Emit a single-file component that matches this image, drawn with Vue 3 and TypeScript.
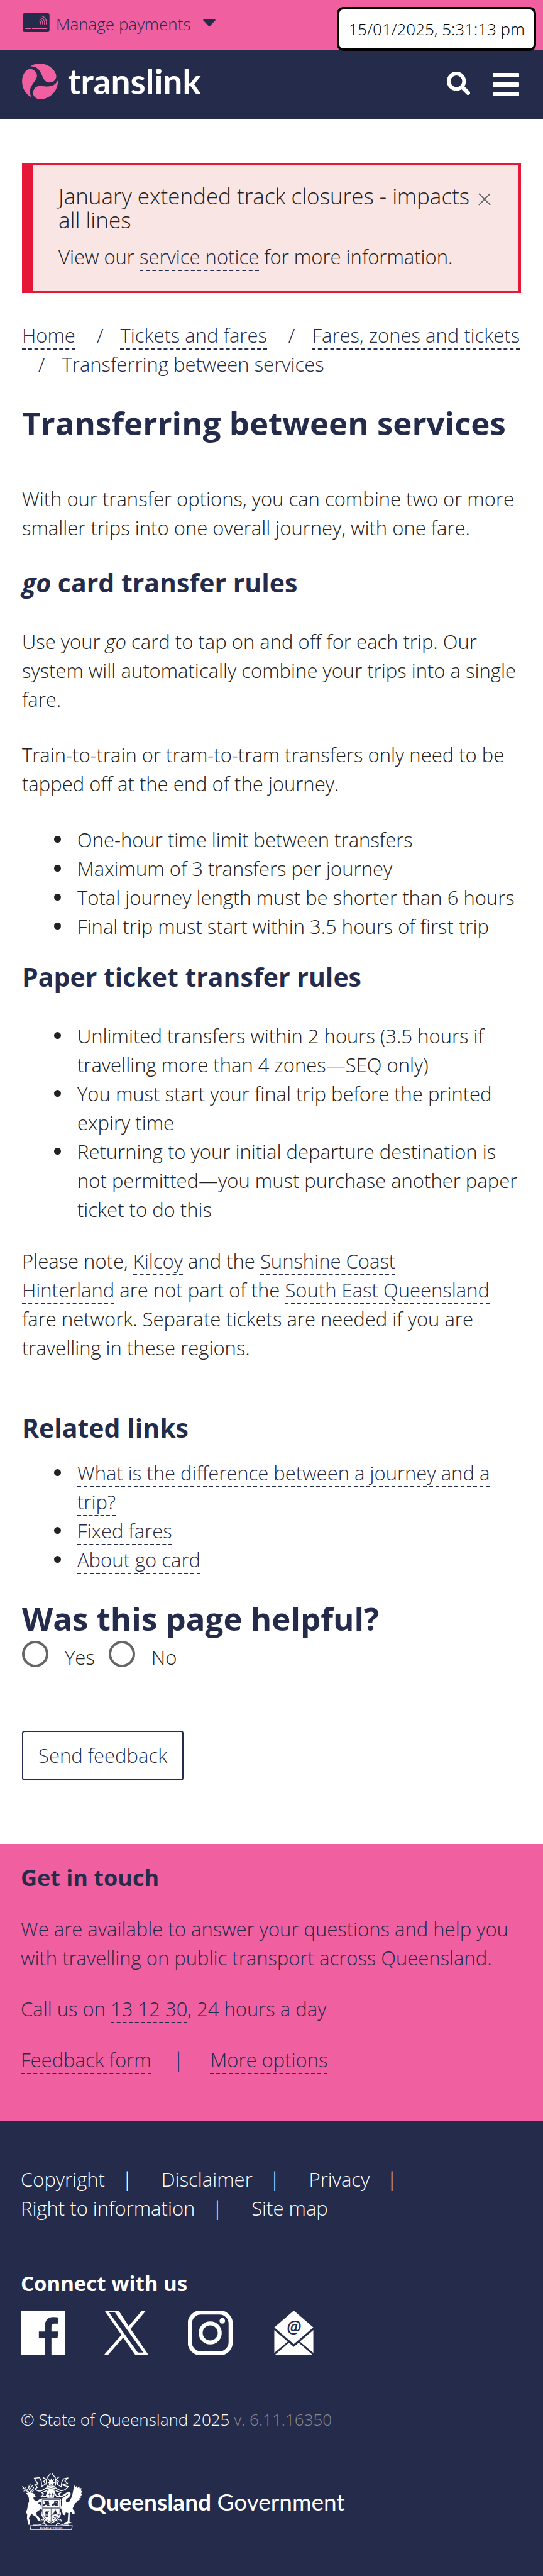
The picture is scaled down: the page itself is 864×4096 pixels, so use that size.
<script setup lang="ts">
import { ref } from 'vue'

interface Crumb {
  label: string
  current?: boolean
}

const alertOpen = ref(true)
const helpful = ref<string | null>(null)

const crumbs: Crumb[] = [
  { label: 'Home' },
  { label: 'Tickets and fares' },
  { label: 'Fares, zones and tickets' },
  { label: 'Transferring between services', current: true },
]

const goCardRules: string[] = [
  'One-hour time limit between transfers',
  'Maximum of 3 transfers per journey',
  'Total journey length must be shorter than 6 hours',
  'Final trip must start within 3.5 hours of first trip',
]

const paperRules: string[] = [
  'Unlimited transfers within 2 hours (3.5 hours if travelling more than 4 zones—SEQ only)',
  'You must start your final trip before the printed expiry time',
  'Returning to your initial departure destination is not permitted—you must purchase another paper ticket to do this',
]

const relatedLinks: string[] = [
  'What is the difference between a journey and a trip?',
  'Fixed fares',
  'About go card',
]

const answers: string[] = ['Yes', 'No']

const footerLinks: string[] = ['Copyright', 'Disclaimer', 'Privacy', 'Right to information', 'Site map']
</script>

<template>
  <div class="page">
    <div class="topbar">
      <button class="payments" type="button">
        <svg class="card-icon" viewBox="41 27 174 123" aria-hidden="true">
          <rect x="41" y="27" width="174" height="123" rx="12" fill="#252b4b" />
          <g fill="none" stroke="#f060a1" stroke-width="5" stroke-linecap="round">
            <path d="M164 45C184 50 200 70 194 97" />
            <path d="M158 56C174 60 186 76 182 97" />
            <path d="M152 67C164 70 172 82 170 97" />
            <path d="M147 78C154 80 159 87 158 97" />
          </g>
          <path d="M60 126H95M104 126H198" fill="none" stroke="#f060a1" stroke-width="6" stroke-linecap="round" />
        </svg>
        <span>Manage payments</span>
        <svg class="caret" viewBox="0 0 20 11" aria-hidden="true">
          <path d="M1 0H19Q21 1 19 2L11 10.500Q10 11.500 9 10.500L1 2Q-1 1 1 0Z" fill="#252b4b" />
        </svg>
      </button>
      <time class="stamp">15/01/2025, 5:31:13 pm</time>
    </div>

    <header class="masthead">
      <a class="brand" href="#">
        <svg class="brand-mark" viewBox="36 350 231 233" aria-hidden="true">
          <g fill="#f060a1">
            <path d="M91 367C113 352 138 350 155 350C215 353 258 400 258 432C258 460 236 474 214 474C184 474 174 448 164 425C149 391 130 367 91 369Z" />
            <path transform="rotate(120 151.500 466.500)" d="M91 367C113 352 138 350 155 350C215 353 258 400 258 432C258 460 236 474 214 474C184 474 174 448 164 425C149 391 130 367 91 369Z" />
            <path transform="rotate(240 151.500 466.500)" d="M91 367C113 352 138 350 155 350C215 353 258 400 258 432C258 460 236 474 214 474C184 474 174 448 164 425C149 391 130 367 91 369Z" />
          </g>
        </svg>
        <span class="brand-name">translink</span>
      </a>
      <div class="tools">
        <button type="button" class="tool" aria-label="Search">
          <svg class="search-icon" viewBox="0 0 50 50" aria-hidden="true">
            <circle cx="20.500" cy="20.500" r="16.500" fill="none" stroke="#fff" stroke-width="8" />
            <path d="M34 34L45.500 45.500" stroke="#fff" stroke-width="9" stroke-linecap="round" />
          </svg>
        </button>
        <button type="button" class="tool" aria-label="Menu">
          <svg class="menu-icon" viewBox="0 0 42 37" aria-hidden="true">
            <rect width="42" height="7" rx="1" fill="#fff" />
            <rect y="15" width="42" height="7" rx="1" fill="#fff" />
            <rect y="30" width="42" height="7" rx="1" fill="#fff" />
          </svg>
        </button>
      </div>
    </header>

    <main>
      <section v-if="alertOpen" class="alert" role="alert">
        <div class="alert-head">
          <p class="alert-title">January extended track closures - impacts all lines</p>
          <button type="button" class="close" aria-label="Close" @click="alertOpen = false">
            <svg viewBox="0 0 20 22" aria-hidden="true">
              <path d="M1 3L19 21M19 3L1 21" stroke="#fff" stroke-width="2" />
              <path d="M1 1L19 19M19 1L1 19" stroke="#6d6465" stroke-width="2" />
            </svg>
          </button>
        </div>
        <p>View our <a href="#">service notice</a> for more information.</p>
      </section>

      <nav aria-label="Breadcrumb">
        <ol class="crumbs">
          <li v-for="crumb in crumbs" :key="crumb.label">
            <span v-if="crumb.current">{{ crumb.label }}</span>
            <a v-else href="#">{{ crumb.label }}</a>
          </li>
        </ol>
      </nav>

      <h1>Transferring between services</h1>
      <p>With our transfer options, you can combine two or more smaller trips into one overall journey, with one fare.</p>

      <h2 class="after-text"><em>go</em> card transfer rules</h2>
      <p>Use your <em>go</em> card to tap on and off for each trip. Our system will automatically combine your trips into a single fare.</p>
      <p class="next">Train-to-train or tram-to-tram transfers only need to be tapped off at the end of the journey.</p>
      <ul class="rules first">
        <li v-for="rule in goCardRules" :key="rule">{{ rule }}</li>
      </ul>

      <h2 class="after-list">Paper ticket transfer rules</h2>
      <ul class="rules">
        <li v-for="rule in paperRules" :key="rule">{{ rule }}</li>
      </ul>
      <p class="note">
        Please note, <a href="#">Kilcoy</a> and the <a href="#">Sunshine Coast Hinterland</a>&nbsp;are not part of the
        <a href="#">South East Queensland</a> fare network. Separate tickets are needed if you are travelling in these regions.
      </p>

      <h2 class="related">Related links</h2>
      <ul class="rules">
        <li v-for="link in relatedLinks" :key="link"><a href="#">{{ link }}</a></li>
      </ul>

      <form @submit.prevent>
        <fieldset>
          <legend>Was this page helpful?</legend>
          <div class="answers">
            <div v-for="answer in answers" :key="answer" class="answer">
              <input :id="'helpful-' + answer" v-model="helpful" type="radio" name="helpful" :value="answer" />
              <label :for="'helpful-' + answer">{{ answer }}</label>
            </div>
          </div>
        </fieldset>
        <button type="submit" class="send">Send feedback</button>
      </form>
    </main>

    <section class="touch">
      <h3>Get in touch</h3>
      <p>We are available to answer your questions and help you with travelling on public transport across Queensland.</p>
      <p>Call us on <a href="#">13 12 30</a>, 24 hours a day</p>
      <div class="touch-links">
        <span><a href="#">Feedback form</a></span>
        <span class="bar">|</span>
        <span><a href="#">More options</a></span>
      </div>
    </section>

    <footer>
      <ul class="legal">
        <li v-for="link in footerLinks" :key="link"><a href="#">{{ link }}</a></li>
      </ul>
      <h3>Connect with us</h3>
      <div class="social">
        <a href="#" aria-label="Facebook">
          <svg viewBox="0 0 96 96" aria-hidden="true">
            <path fill="#fff" d="M4 0H92A4 4 0 0 1 96 4V92A4 4 0 0 1 92 96H66V59H79L81 45H66V35Q66 28 73 28H81V15Q76 14 70 14C58 14 52 22 52 33V45H39V59H52V96H4A4 4 0 0 1 0 92V4A4 4 0 0 1 4 0Z" />
          </svg>
        </a>
        <a href="#" aria-label="X">
          <svg viewBox="0 0 97 98" aria-hidden="true">
            <path fill="#fff" fill-rule="evenodd" d="M0 0H31L53 34L82 0H91L57 40L97 98H68L41 59L7 98H0V96L37 53ZM10 4L73 92H85L23 4Z" />
          </svg>
        </a>
        <a href="#" aria-label="Instagram">
          <svg viewBox="0 0 96 96" aria-hidden="true">
            <rect x="4" y="4" width="88" height="88" rx="24" fill="none" stroke="#fff" stroke-width="9" />
            <circle cx="48" cy="48" r="20.500" fill="none" stroke="#fff" stroke-width="8.500" />
            <circle cx="74" cy="22" r="6" fill="#fff" />
          </svg>
        </a>
        <a href="#" aria-label="Email">
          <svg viewBox="-6 0 96 96" aria-hidden="true">
            <g fill="#fff">
              <path d="M42 0L84 36L42 72L0 36Z" />
              <path d="M0 42L29 66.500L0 91Z" />
              <path d="M84 42L55 66.500L84 91Z" />
              <path d="M31.500 69L42 78L52.500 69L82 94.500Q81 96 79 96H5Q3 96 2 94.500Z" />
            </g>
            <text x="42" y="47" text-anchor="middle" class="at">@</text>
          </svg>
        </a>
      </div>
      <p class="rights">© State of Queensland 2025 <span>v. 6.11.16350</span></p>
      <a class="gov" href="#">
        <svg class="crest" viewBox="54 58 394 368" aria-hidden="true">
          <!-- stag -->
          <path fill="#fff" d="M80 186L96 180L104 176L112 184L126 184L138 196L144 206L136 212L128 210L130 226Q142 238 152 236L174 222L180 226V240L158 250L176 264L178 286Q170 300 158 302L146 316L152 332L164 340L174 356L170 368L156 362L150 344L128 330L118 322L106 334L98 348L104 364L106 386L108 392H94L92 372L86 350L88 326L80 310L88 290L92 262L100 240L98 212L92 200Z" />
          <g fill="none" stroke="#fff" stroke-width="5" stroke-linecap="round" stroke-linejoin="round">
            <path d="M102 180Q78 174 58 142M66 154L56 158M76 168L66 172M84 172L78 148M96 176L88 162" />
            <path d="M112 182Q98 160 92 132M98 152L108 126M104 164L122 136M112 176L130 150M116 180L132 166" />
          </g>
          <!-- brolga -->
          <path fill="#fff" d="M340 186Q350 174 362 178Q376 184 370 200Q362 214 346 222Q336 232 344 244L364 240Q376 218 382 200L390 160L396 134L404 146L412 138L416 152L428 140L430 154L444 154L438 168L448 176L440 186L446 196L436 204L440 214L428 220L430 230L416 234L414 246L402 250L392 268L384 288L396 304L398 322L386 324L374 308L366 312L364 372L378 376V382L356 384L346 390H334L326 380L352 370L356 316L340 312L334 330L322 326L314 302L308 280L314 256L312 232Q316 214 332 208Q352 200 356 192Q350 188 340 200L312 212V204Z" />
          <!-- mantling and helm -->
          <g fill="none" stroke="#fff" stroke-width="6" stroke-linejoin="round" stroke-linecap="round">
            <path d="M220 148L186 168Q160 180 138 158L154 148L138 128L158 126L134 88L168 84Q186 104 180 144L208 126L196 108L214 96L192 84" />
            <path d="M268 148L302 168Q332 176 356 142L334 138L318 132L352 122L334 106L354 86L326 92Q308 112 312 146L282 126L292 108L274 96L296 80" />
            <path d="M216 86Q226 72 238 60M272 86Q262 72 252 60M218 88Q206 112 220 142M270 88Q282 112 268 142" />
            <path d="M222 144Q244 134 266 144M218 156Q244 146 270 156M220 166Q244 158 268 166" />
            <path d="M214 170L182 182L196 190L178 210L210 206L222 182M276 170L308 182L290 190L310 208L280 208L266 182" />
          </g>
          <path fill="#fff" d="M226 92L240 102L244 88L250 102L264 92L258 110L270 118L256 122L264 138L244 128L226 138L232 122L220 116L232 110Z" />
          <path fill="#fff" d="M218 172Q244 160 270 172L262 216H220L212 206Z" />
          <path d="M234 184V208M254 184V208M226 194H242M246 194H262" fill="none" stroke="#252b4b" stroke-width="3" />
          <!-- shield -->
          <path fill="#fff" stroke="#fff" stroke-width="4" d="M180 222H306V282L300 300L308 322Q290 366 244 382Q196 366 180 322L188 300L180 282Z" />
          <g fill="none" stroke="#252b4b" stroke-width="3">
            <path d="M186 228H301V280H186ZM186 286H301V318Q284 360 244 376Q204 360 186 318ZM244 286V376M244 330Q270 316 298 326" />
          </g>
          <g fill="#252b4b">
            <path d="M198 234L206 238H220L230 232L228 246Q236 252 228 258L236 266L222 268L210 260L196 272L192 260L204 252Z" />
            <path d="M250 262Q254 250 264 252Q260 236 276 234Q292 236 290 250L280 258L294 262L282 272L264 264L252 270ZM270 242L276 250L282 244Z" fill-rule="evenodd" />
            <path d="M200 296L208 320H224L232 296L222 310L216 292L210 310ZM206 326H226V330H206ZM208 334H224V340H208Z" />
            <path d="M272 292L282 318Q272 324 258 322Z" />
          </g>
          <path d="M260 334L280 352M280 334L258 354M256 342L264 350M284 338L276 346" fill="none" stroke="#252b4b" stroke-width="4" />
          <!-- scroll base -->
          <path d="M126 394Q180 398 196 380Q206 362 190 356Q176 358 178 368L190 366M362 394Q310 398 292 380Q282 362 298 356Q312 358 310 368L298 366M196 380Q214 390 210 398M292 380Q274 390 278 398" fill="none" stroke="#fff" stroke-width="5" />
          <path d="M106 398H382L378 423H110Z" fill="#252b4b" stroke="#fff" stroke-width="5" />
          <text x="244" y="417" text-anchor="middle" class="motto">AUDAX AT FIDELIS</text>
        </svg>
        <span><strong>Queensland</strong> Government</span>
      </a>
    </footer>
  </div>
</template>

<style>
body {
  margin: 0;
  background: #fff;
}
</style>

<style scoped>
.page {
  display: flex;
  flex-direction: column;
  min-height: 100vh;
  color: #222;
  font-family: 'Open Sans', 'Noto Sans', sans-serif;
  font-size: 31px;
  font-weight: 300;
  line-height: 46px;
}

p,
ul,
ol,
h1,
h2,
h3,
fieldset,
legend {
  margin: 0;
  padding: 0;
}

button {
  margin: 0;
  border: 0;
  padding: 0;
  background: none;
  color: #252b4b;
  font: inherit;
  cursor: pointer;
}

svg {
  display: block;
}

a {
  border-bottom: 2px dashed #252b4b;
  color: #252b4b;
  text-decoration: none;
}

h1,
h2,
h3,
legend {
  color: #252b4b;
  font-weight: 700;
}

.topbar {
  position: relative;
  display: flex;
  align-items: flex-start;
  height: 79px;
  padding: 0 36px;
  background: #f060a1;
}

.payments {
  display: flex;
  align-items: center;
  padding-top: 18px;
  font-size: 26px;
  line-height: 40px;
}

.card-icon {
  width: 43px;
  height: 30px;
  margin: 0 10px 4px 0;
}

.caret {
  width: 20px;
  height: 11px;
  margin: 0 0 4px 20px;
}

.stamp {
  position: absolute;
  top: 11px;
  right: 11px;
  z-index: 1;
  border: 4px solid #000;
  border-radius: 10px;
  padding: 12px 14px;
  background: #fff;
  color: #000;
  font-size: 26px;
  line-height: 38px;
}

.masthead {
  display: flex;
  align-items: center;
  justify-content: space-between;
  height: 110px;
  padding: 0 38px 0 35px;
  background: #252b4b;
}

.brand {
  display: flex;
  align-items: center;
  gap: 16px;
  border: 0;
  padding-bottom: 10px;
}

.brand-mark {
  width: 57px;
  height: 57px;
}

.brand-name {
  color: #fff;
  font-family: Lato, 'Open Sans', sans-serif;
  font-size: 55px;
  font-weight: 700;
  line-height: 57px;
}

.tools {
  display: flex;
  align-items: center;
  gap: 36px;
}

.search-icon {
  width: 37px;
  height: 37px;
  margin-bottom: 4px;
}

.menu-icon {
  width: 42px;
  height: 37px;
}

main {
  padding: 70px 35px 101px;
}

.alert {
  border: 4px solid #e51937;
  border-left-width: 18px;
  padding: 30px 44px 31px 40px;
  background: #f9e5e3;
}

.alert-head {
  display: flex;
  align-items: flex-start;
  justify-content: space-between;
  margin-bottom: 16px;
}

.alert-title {
  font-size: 35px;
  line-height: 38px;
}

.close {
  flex: none;
  padding-top: 14px;
}

.close svg {
  width: 20px;
  height: 22px;
}

.crumbs {
  display: flex;
  flex-wrap: wrap;
  column-gap: 8px;
  margin-top: 44px;
  color: #252b4b;
  list-style: none;
}

.crumbs li + li::before {
  content: '/';
  margin: 0 27px 0 26px;
}

h1 {
  margin: 38px 0 66px;
  font-size: 51px;
  line-height: 64px;
}

h2 {
  margin-bottom: 46px;
  font-size: 41px;
  line-height: 50px;
}

.after-text {
  margin-top: 39px;
}

.after-list {
  margin-top: 32px;
}

.related {
  margin: 79px 0 24px;
}

.next {
  margin-top: 42px;
}

.rules {
  padding-left: 88px;
  list-style: none;
}

.rules li::before {
  content: '';
  display: inline-block;
  width: 11px;
  height: 11px;
  margin: 0 26px 0 -37px;
  border-radius: 50%;
  background: #222;
  vertical-align: 7px;
}

.rules.first {
  margin-top: 43px;
}

.note {
  margin-top: 36px;
}

fieldset {
  margin-top: 38px;
  border: 0;
}

legend {
  font-size: 51px;
  line-height: 64px;
}

.answers {
  display: flex;
  gap: 22px;
  margin-top: 4px;
}

.answer {
  display: flex;
  gap: 26px;
}

.answer input {
  appearance: none;
  width: 42px;
  height: 42px;
  margin: 0;
  border: 4px solid #666;
  border-radius: 50%;
  background: #fff;
}

.answer input:checked {
  background: #252b4b;
}

.answer label {
  padding-top: 3px;
}

.send {
  margin-top: 94px;
  border: 2px solid #252b4b;
  border-radius: 4px;
  padding: 14px 24px 15px;
}

.touch {
  padding: 30px 33px 75px;
  background: #f060a1;
  color: #252b4b;
}

.touch h3 {
  margin-bottom: 34px;
  font-size: 36px;
  line-height: 48px;
}

.touch p {
  margin-bottom: 35px;
}

.touch-links {
  display: flex;
}

.bar {
  margin: 0 42px 0 35px;
}

footer {
  flex: 1;
  padding: 69px 33px 40px;
  background: #252b4b;
  color: #fff;
}

footer a {
  border: 0;
  color: #fff;
}

.legal {
  display: flex;
  flex-wrap: wrap;
  list-style: none;
}

.legal li:not(:last-child)::after {
  content: '|';
  margin: 0 46px 0 27px;
}

footer h3 {
  margin: 74px 0 20px;
  color: #fff;
  font-size: 33px;
  line-height: 46px;
}

.social {
  display: flex;
  gap: 62px;
}

.social svg {
  width: 71px;
  height: 71px;
}

.at {
  fill: #252b4b;
  font-family: 'Open Sans', sans-serif;
  font-size: 36px;
  font-style: italic;
  font-weight: 600;
}

.rights {
  margin-top: 79px;
  font-size: 26px;
}

.rights span {
  color: #888;
}

.gov {
  display: flex;
  align-items: center;
  gap: 8px;
  margin-top: 63px;
  padding-left: 2px;
  font-family: Lato, 'Open Sans', sans-serif;
  font-size: 37px;
  font-weight: 400;
}

.gov strong {
  font-weight: 700;
}

.crest {
  width: 96px;
  height: 90px;
}

.motto {
  fill: #fff;
  font-family: 'Open Sans', sans-serif;
  font-size: 17px;
  font-weight: 600;
}
</style>
